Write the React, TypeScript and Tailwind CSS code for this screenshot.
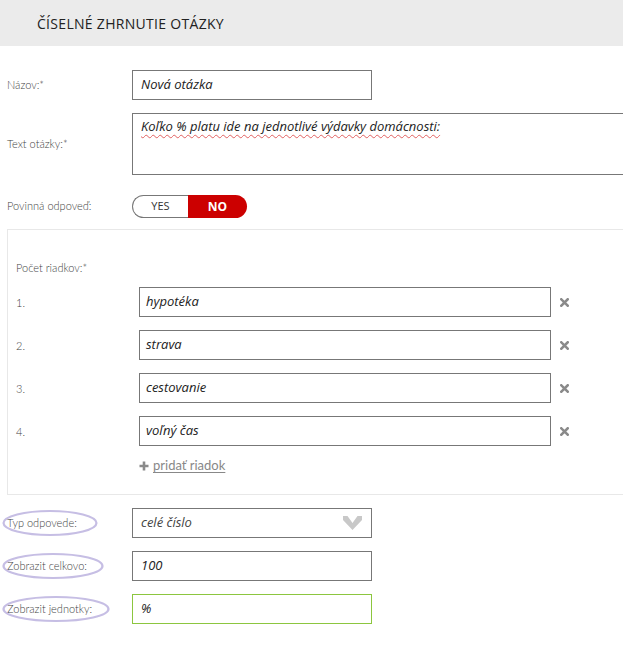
import React from 'react';

const labelFont = { fontFamily: '"Lato", "Open Sans", sans-serif' };

function Ellipse({ w }: { w: number }) {
  return (
    <svg className="absolute left-[-5px] top-[-6px] pointer-events-none" width={w} height={28} viewBox={`0 0 ${w} 28`}>
      <ellipse cx={w / 2} cy={14} rx={w / 2 - 1.5} ry={12} fill="none" stroke="#c6bee4" strokeWidth={2.2} />
    </svg>
  );
}

function RemoveIcon() {
  return (
    <svg width="9" height="9" viewBox="0 0 9 9" className="ml-[9px]">
      <path d="M1.3 1.3 L7.7 7.7 M7.7 1.3 L1.3 7.7" stroke="#8a8a8a" strokeWidth="2.6" strokeLinecap="square" />
    </svg>
  );
}

const rows = ['hypotéka', 'strava', 'cestovanie', 'voľný čas'];

export default function App() {
  return (
    <div className="w-[623px] h-[654px] overflow-hidden bg-white" style={{ fontFamily: '"Open Sans", sans-serif' }}>
      {/* Header */}
      <div className="h-[46px] bg-[#ebebeb] flex items-center pl-[37px]">
        <h1 className="text-[14px] font-medium uppercase tracking-[0.3px] text-[#222]">Číselné zhrnutie otázky</h1>
      </div>

      <div className="pl-[7px] pt-[24px]">
        {/* Názov */}
        <div className="flex items-center h-[30px]">
          <label className="w-[125px] shrink-0 text-[11px] font-light text-[#444]" style={labelFont}>Názov:*</label>
          <div className="w-[240px] h-[30px] shrink-0 border border-[#777] flex items-center px-[8px] text-[13px] italic text-[#222]">Nová otázka</div>
        </div>

        {/* Text otázky */}
        <div className="flex items-center mt-[13px] h-[62px]">
          <label className="w-[125px] shrink-0 text-[11px] font-light text-[#444]" style={labelFont}>Text otázky:*</label>
          <div className="w-[520px] h-[62px] shrink-0 border border-[#777] px-[8px] pt-[3px] text-[13px] italic text-[#222]">
            <span className="underline decoration-wavy decoration-[#e06060] decoration-[1px] underline-offset-[3px]">Koľko % platu ide na jednotlivé výdavky domácnosti:</span>
          </div>
        </div>

        {/* Povinná odpoveď */}
        <div className="flex items-center mt-[20px] h-[23px]">
          <label className="w-[125px] shrink-0 text-[11px] font-light text-[#444]" style={labelFont}>Povinná odpoveď:</label>
          <div className="flex h-[23px]">
            <div className="w-[56px] h-[23px] border border-[#777] border-r-0 rounded-l-full flex items-center justify-center text-[11px] text-[#333]">YES</div>
            <div className="w-[59px] h-[23px] bg-[#cc0000] rounded-r-full flex items-center justify-center text-[12px] font-bold text-white">NO</div>
          </div>
        </div>

        {/* Panel */}
        <div className="mt-[11px] w-[650px] border border-[#e8e8e8] pl-[8px] pt-[30px] pb-[20px]">
          <div className="h-[16px] flex items-center text-[11px] font-light text-[#444]" style={labelFont}>Počet riadkov:*</div>
          <div className="mt-[11px] flex flex-col gap-[13px]">
            {rows.map((r, i) => (
              <div key={i} className="flex items-center h-[30px]">
                <span className="w-[123px] shrink-0 text-[11px] font-light text-[#444] pt-[2px]" style={labelFont}>{i + 1}.</span>
                <div className="w-[412px] h-[30px] shrink-0 border border-[#777] flex items-center px-[6px] text-[13px] italic text-[#222]">{r}</div>
                <RemoveIcon />
              </div>
            ))}
          </div>
          <div className="mt-[12px] ml-[123px] flex items-center gap-[4px] h-[16px]">
            <svg width="10" height="10" viewBox="0 0 10 10">
              <path d="M5 0.5 V9.5 M0.5 5 H9.5" stroke="#8a8a8a" strokeWidth="2.6" />
            </svg>
            <span className="text-[13px] text-[#888] underline underline-offset-[2px]" style={labelFont}>pridať riadok</span>
          </div>
        </div>

        {/* Typ odpovede */}
        <div className="flex items-center mt-[13px] h-[30px]">
          <label className="w-[125px] shrink-0 text-[11px] font-light text-[#444]" style={labelFont}>
            <span className="relative inline-block">Typ odpovede:<Ellipse w={96} /></span>
          </label>
          <div className="w-[240px] h-[30px] shrink-0 border border-[#777] flex items-center justify-between pl-[8px] pr-[9px] text-[13px] italic text-[#444]">
            <span>celé číslo</span>
            <svg width="19" height="14" viewBox="0 0 19 14">
              <polygon points="0,0 4.5,0 9.5,7 14.5,0 19,0 19,4 9.5,14 0,4" fill="#c8c8c8" />
            </svg>
          </div>
        </div>

        {/* Zobrazit celkovo */}
        <div className="flex items-center mt-[13px] h-[30px]">
          <label className="w-[125px] shrink-0 text-[11px] font-light text-[#444]" style={labelFont}>
            <span className="relative inline-block">Zobrazit celkovo:<Ellipse w={102} /></span>
          </label>
          <div className="w-[240px] h-[30px] shrink-0 border border-[#777] flex items-center px-[8px] text-[13px] italic text-[#222]">100</div>
        </div>

        {/* Zobrazit jednotky */}
        <div className="flex items-center mt-[13px] h-[30px]">
          <label className="w-[125px] shrink-0 text-[11px] font-light text-[#444]" style={labelFont}>
            <span className="relative inline-block">Zobrazit jednotky:<Ellipse w={108} /></span>
          </label>
          <div className="w-[240px] h-[30px] shrink-0 border border-[#8cc63f] flex items-center px-[8px] text-[13px] italic text-[#222]">%</div>
        </div>
      </div>
    </div>
  );
}
